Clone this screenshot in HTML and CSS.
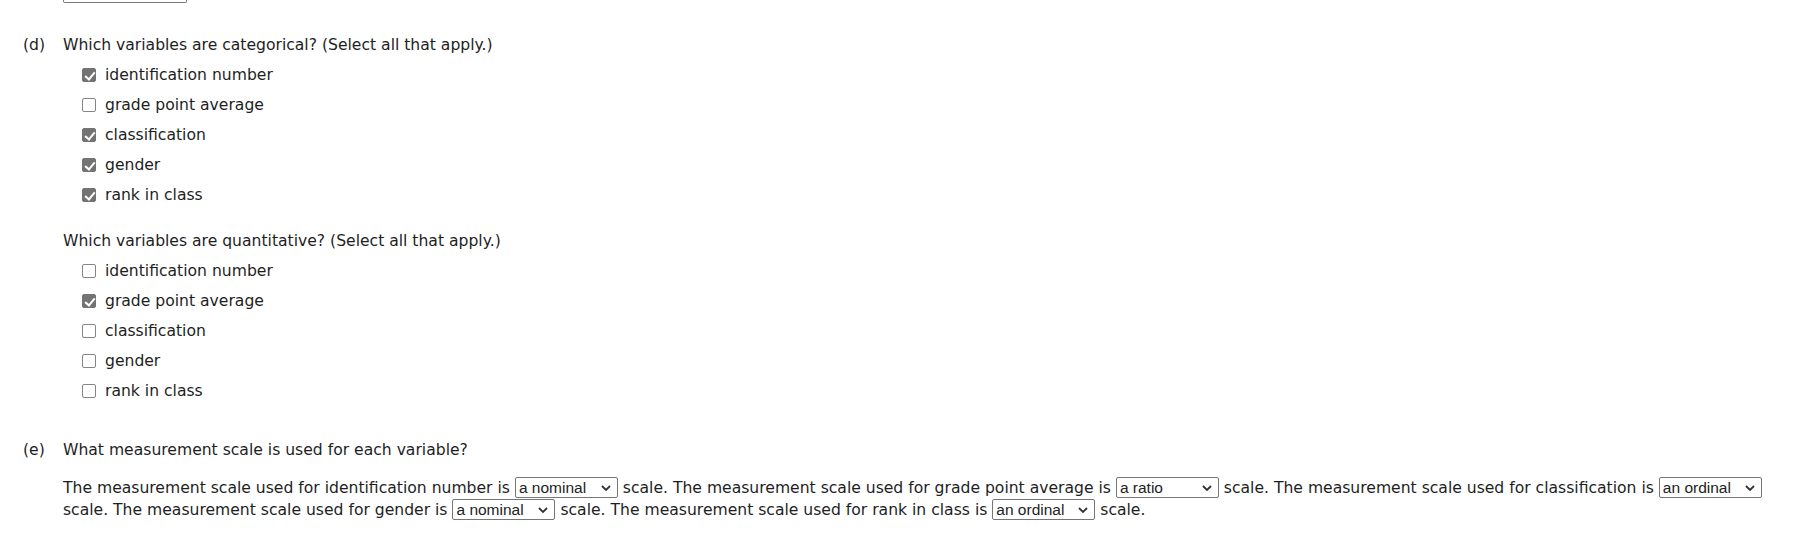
FILE: index.html
```html
<!DOCTYPE html>
<html lang="en">
<head>
    <meta charset="UTF-8">
    <meta name="viewport" content="width=device-width, initial-scale=1.0">
    <title>Variables and Measurement Scales</title>
    <link rel="stylesheet" href="styles.css">
</head>
<body>
    <div class="sheet">
        <div class="answer-stub"></div>

        <section class="part">
            <span class="part-label">(d)</span>
            <div class="part-body">
                <p class="prompt">Which variables are categorical? (Select all that apply.)</p>
                <ul class="choices">
                    <li><label><input type="checkbox" checked><span>identification number</span></label></li>
                    <li><label><input type="checkbox"><span>grade point average</span></label></li>
                    <li><label><input type="checkbox" checked><span>classification</span></label></li>
                    <li><label><input type="checkbox" checked><span>gender</span></label></li>
                    <li><label><input type="checkbox" checked><span>rank in class</span></label></li>
                </ul>

                <p class="prompt prompt-next">Which variables are quantitative? (Select all that apply.)</p>
                <ul class="choices">
                    <li><label><input type="checkbox"><span>identification number</span></label></li>
                    <li><label><input type="checkbox" checked><span>grade point average</span></label></li>
                    <li><label><input type="checkbox"><span>classification</span></label></li>
                    <li><label><input type="checkbox"><span>gender</span></label></li>
                    <li><label><input type="checkbox"><span>rank in class</span></label></li>
                </ul>
            </div>
        </section>

        <section class="part part-e">
            <span class="part-label">(e)</span>
            <div class="part-body">
                <p class="prompt">What measurement scale is used for each variable?</p>
                <p class="sentence">
                    The measurement scale used for identification number is
                    <span class="pick"><select>
                        <option>---Select---</option>
                        <option selected>a nominal</option>
                        <option>an ordinal</option>
                        <option>an interval</option>
                        <option>a ratio</option>
                    </select><svg viewBox="0 0 10 6"><polyline points="1,1 5,5 9,1"/></svg></span>
                    scale. The measurement scale used for grade point average is
                    <span class="pick"><select>
                        <option>---Select---</option>
                        <option>a nominal</option>
                        <option>an ordinal</option>
                        <option>an interval</option>
                        <option selected>a ratio</option>
                    </select><svg viewBox="0 0 10 6"><polyline points="1,1 5,5 9,1"/></svg></span>
                    scale. The measurement scale used for classification is
                    <span class="pick"><select>
                        <option>---Select---</option>
                        <option>a nominal</option>
                        <option selected>an ordinal</option>
                        <option>an interval</option>
                        <option>a ratio</option>
                    </select><svg viewBox="0 0 10 6"><polyline points="1,1 5,5 9,1"/></svg></span>
                    scale. The measurement scale used for gender is
                    <span class="pick"><select>
                        <option>---Select---</option>
                        <option selected>a nominal</option>
                        <option>an ordinal</option>
                        <option>an interval</option>
                        <option>a ratio</option>
                    </select><svg viewBox="0 0 10 6"><polyline points="1,1 5,5 9,1"/></svg></span>
                    scale. The measurement scale used for rank in class is
                    <span class="pick"><select>
                        <option>---Select---</option>
                        <option>a nominal</option>
                        <option selected>an ordinal</option>
                        <option>an interval</option>
                        <option>a ratio</option>
                    </select><svg viewBox="0 0 10 6"><polyline points="1,1 5,5 9,1"/></svg></span>
                    scale.
                </p>
            </div>
        </section>
    </div>
</body>
</html>
```

FILE: styles.css
```css
* {
    margin: 0;
    padding: 0;
    box-sizing: border-box;
}

body {
    font-family: "DejaVu Sans", Verdana, sans-serif;
    font-size: 15.6px;
    color: #1e1e1e;
    background: #fff;
}

.sheet {
    padding: 0 24px 0 23px;
}

/* bottom edge of the answer field from part (c) */
.answer-stub {
    margin-left: 40px;
    width: 124px;
    height: 3px;
    border: 1px solid #7a7a7a;
    border-top: none;
    border-radius: 0 0 2px 2px;
}

.part {
    display: grid;
    grid-template-columns: 40px 1fr;
    margin-top: 27px;
}

.part-e {
    margin-top: 29px;
}

.part-label,
.prompt {
    line-height: 30px;
}

.prompt-next {
    margin-top: 16px;
}

.choices {
    list-style: none;
    padding-left: 19px;
}

.choices li {
    height: 30px;
    display: flex;
    align-items: center;
}

.choices label {
    display: flex;
    align-items: center;
    gap: 9px;
}

input[type="checkbox"] {
    appearance: none;
    position: relative;
    flex: none;
    width: 14px;
    height: 14px;
    border: 1px solid #858585;
    border-radius: 2px;
    background: #fff;
}

input[type="checkbox"]:checked {
    background: #737373;
    border-color: #737373;
}

input[type="checkbox"]:checked::after {
    content: "";
    position: absolute;
    left: 4px;
    top: 1px;
    width: 4px;
    height: 8px;
    border: solid #fff;
    border-width: 0 2px 2px 0;
    transform: rotate(40deg);
}

.sentence {
    margin-top: 12px;
    line-height: 22px;
}

.pick {
    position: relative;
    display: inline-block;
}

.pick select {
    appearance: none;
    width: 103px;
    height: 21px;
    padding: 0 22px 0 3px;
    border: 1px solid #767676;
    border-radius: 2px;
    background: #fff;
    color: #222;
    font-family: "Liberation Sans", Arial, sans-serif;
    font-size: 15.5px;
}

.pick svg {
    position: absolute;
    right: 7px;
    top: 50%;
    width: 10px;
    height: 6px;
    transform: translateY(-50%);
    fill: none;
    stroke: #333;
    stroke-width: 1.8;
    pointer-events: none;
}
```
